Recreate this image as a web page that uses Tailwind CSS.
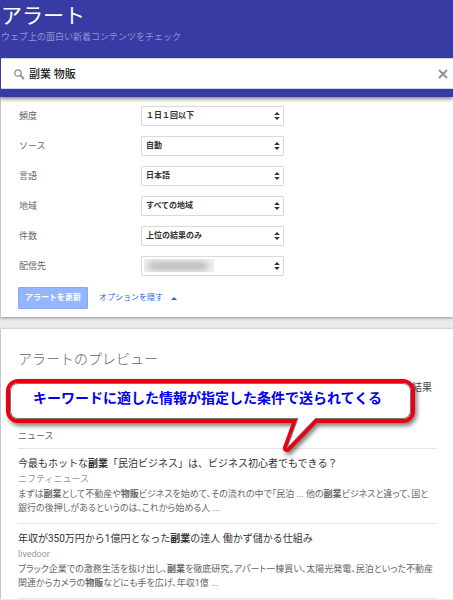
<!DOCTYPE html>
<html lang="ja">
<head>
  <meta charset="UTF-8" />
  <meta name="viewport" content="width=device-width, initial-scale=1.0" />
  <title>アラート</title>
  <script src="https://cdn.jsdelivr.net/npm/@tailwindcss/browser@4"></script>
</head>
<body class="bg-[#ebebeb] font-['Roboto','Noto_Sans_CJK_JP',sans-serif] text-[#666]">
  <!-- Header -->
  <header class="relative bg-[#373ba3] pt-1 pb-2 shadow-[0_2px_4px_rgba(0,0,0,0.5)]">
    <h1 class="pl-px text-[21px] leading-6 text-white">アラート</h1>
    <p class="pl-px text-[9px] leading-[18px] text-[#9194d6]">ウェブ上の面白い新着コンテンツをチェック</p>
    <form class="mt-3 ml-px flex h-[31px] items-center border-y border-[#d5d5e0] bg-white pr-1 pl-3">
      <svg class="size-3 shrink-0" viewBox="0 0 12 12" fill="none" stroke="#8c8c8c">
        <circle cx="5" cy="5" r="3.2" stroke-width="1.3" />
        <path d="M7.4 7.4L11 11" stroke-width="1.8" />
      </svg>
      <input type="text" value="副業 物販" aria-label="検索キーワード" class="ml-1 min-w-0 flex-1 pt-1 text-[11px] font-medium text-[#222] outline-none">
      <button type="button" aria-label="クリア" class="p-px">
        <svg class="size-2.5" viewBox="0 0 10 10" stroke="#8f8f8f" stroke-width="1.8"><path d="M1 1L9 9M9 1L1 9" /></svg>
      </button>
    </form>
  </header>

  <!-- Options -->
  <section class="border-l border-[#c8c8c8] bg-white pt-[9px] pb-2 pl-[17px] shadow-[0_1px_3px_rgba(0,0,0,0.4)]">
    <div class="grid grid-cols-[122px_143px] items-center gap-y-2.5 pl-px text-[9px]">
      <label for="freq" class="leading-5">頻度</label>
      <div class="relative h-5">
        <select id="freq" class="block size-full appearance-none rounded-[1px] border border-[#d9d9d9] bg-white pl-1 text-[8px] font-bold text-[#333]"><option>１日１回以下</option></select>
        <svg class="pointer-events-none absolute top-1.5 right-1 h-2 w-1.5" viewBox="0 0 6 8" fill="#333"><path d="M3 0L5.8 3H.2zM3 8L.2 5H5.8z" /></svg>
      </div>
      <label for="source" class="leading-5">ソース</label>
      <div class="relative h-5">
        <select id="source" class="block size-full appearance-none rounded-[1px] border border-[#d9d9d9] bg-white pl-1 text-[8px] font-bold text-[#333]"><option>自動</option></select>
        <svg class="pointer-events-none absolute top-1.5 right-1 h-2 w-1.5" viewBox="0 0 6 8" fill="#333"><path d="M3 0L5.8 3H.2zM3 8L.2 5H5.8z" /></svg>
      </div>
      <label for="language" class="leading-5">言語</label>
      <div class="relative h-5">
        <select id="language" class="block size-full appearance-none rounded-[1px] border border-[#d9d9d9] bg-white pl-1 text-[8px] font-bold text-[#333]"><option>日本語</option></select>
        <svg class="pointer-events-none absolute top-1.5 right-1 h-2 w-1.5" viewBox="0 0 6 8" fill="#333"><path d="M3 0L5.8 3H.2zM3 8L.2 5H5.8z" /></svg>
      </div>
      <label for="region" class="leading-5">地域</label>
      <div class="relative h-5">
        <select id="region" class="block size-full appearance-none rounded-[1px] border border-[#d9d9d9] bg-white pl-1 text-[8px] font-bold text-[#333]"><option>すべての地域</option></select>
        <svg class="pointer-events-none absolute top-1.5 right-1 h-2 w-1.5" viewBox="0 0 6 8" fill="#333"><path d="M3 0L5.8 3H.2zM3 8L.2 5H5.8z" /></svg>
      </div>
      <label for="count" class="leading-5">件数</label>
      <div class="relative h-5">
        <select id="count" class="block size-full appearance-none rounded-[1px] border border-[#d9d9d9] bg-white pl-1 text-[8px] font-bold text-[#333]"><option>上位の結果のみ</option></select>
        <svg class="pointer-events-none absolute top-1.5 right-1 h-2 w-1.5" viewBox="0 0 6 8" fill="#333"><path d="M3 0L5.8 3H.2zM3 8L.2 5H5.8z" /></svg>
      </div>
      <label for="deliver" class="leading-5">配信先</label>
      <div class="relative h-5">
        <select id="deliver" class="block size-full appearance-none rounded-[1px] border border-[#d9d9d9] bg-white pl-1 text-[8px] font-bold text-[#333]"><option></option></select>
        <!-- masked mail address -->
        <div class="pointer-events-none absolute top-[3px] left-[3px] h-[13px] w-[70px] overflow-hidden bg-[#efefef]">
          <div class="mr-1.5 ml-1 mt-[3px] h-2 rounded bg-[#b8b8b8] blur-[3px]"></div>
        </div>
        <svg class="pointer-events-none absolute top-1.5 right-1 h-2 w-1.5" viewBox="0 0 6 8" fill="#333"><path d="M3 0L5.8 3H.2zM3 8L.2 5H5.8z" /></svg>
      </div>
    </div>
    <div class="mt-[11px] flex items-center">
      <button type="button" class="h-[22px] w-[70px] rounded-[1px] border border-[#86aaf5] bg-[#94b6fe] text-[8px] font-bold text-white">アラートを更新</button>
      <a href="#" class="ml-[11px] flex items-center gap-2 text-[8px] text-[#2f62e0]">オプションを隠す
        <svg class="h-[3px] w-1.5" viewBox="0 0 6 3" fill="#2f62e0"><path d="M3 0L6 3H0z" /></svg>
      </a>
    </div>
  </section>

  <!-- Preview -->
  <section class="mt-3 border-l border-[#c8c8c8] bg-white pr-4 pl-[17px] shadow-[0_0_2px_rgba(0,0,0,0.3)]">
    <h2 class="pt-5 text-[14px] leading-5 font-light">アラートのプレビュー</h2>
    <div class="relative -mr-4 -ml-[18px] pt-2.5">
      <p class="pt-px pr-[21px] text-right text-[10px] leading-4 text-[#444]">結果</p>
      <!-- Speech bubble -->
      <div class="absolute top-2.5 right-[38px] left-1.5 drop-shadow-[2px_3px_2px_rgba(0,0,0,0.5)]">
        <div class="rounded-xl border-4 border-[#ea0010] bg-white">
          <p class="rounded-lg border border-[#777] pt-[3px] pb-[9px] pl-[22px] text-[14px] leading-[22px] font-bold whitespace-nowrap text-[#0000f0]">キーワードに適した情報が指定した条件で送られてくる</p>
        </div>
        <svg class="absolute top-[38px] left-[67%] h-10 w-[50px]" viewBox="0 0 50 40">
          <clipPath id="below"><rect y="2" width="50" height="38" /></clipPath>
          <path d="M18 1L7 31L36 1" fill="none" stroke="#ea0010" stroke-width="8" stroke-linejoin="round" clip-path="url(#below)" />
          <path d="M18 1L7 31L36 1" fill="#fff" stroke="#777" />
        </svg>
      </div>
    </div>
    <h3 class="border-b border-[#e5e5e5] pt-8 pb-1 text-[9px] leading-4">ニュース</h3>
    <article class="border-b border-[#e5e5e5] pt-[7px] pb-2">
      <h4 class="text-[10px] leading-4 text-[#333]"><a href="#">今最もホットな<b>副業</b>「民泊ビジネス」は、ビジネス初心者でもできる？</a></h4>
      <p class="text-[9px] leading-[15px] text-[#999]">ニフティニュース</p>
      <p class="text-[9px] leading-[14px] [font-feature-settings:'palt']">まずは<b>副業</b>として不動産や<b>物販</b>ビジネスを始めて、その流れの中で「民泊 ... 他の<b>副業</b>ビジネスと違って、国と<br>銀行の後押しがあるというのは、これから始める人 ...</p>
    </article>
    <article class="border-b border-[#e5e5e5] pt-[7px] pb-2">
      <h4 class="text-[10px] leading-4 text-[#333]"><a href="#">年収が350万円から1億円となった<b>副業</b>の達人 働かず儲かる仕組み</a></h4>
      <p class="text-[9px] leading-[15px] text-[#999]">livedoor</p>
      <p class="text-[9px] leading-[14px] [font-feature-settings:'palt']">ブラック企業での激務生活を抜け出し、<b>副業</b>を徹底研究。アパート一棟買い、太陽光発電、民泊といった不動産<br>関連からカメラの<b>物販</b>などにも手を広げ、年収1億 ...</p>
    </article>
  </section>
</body>
</html>
